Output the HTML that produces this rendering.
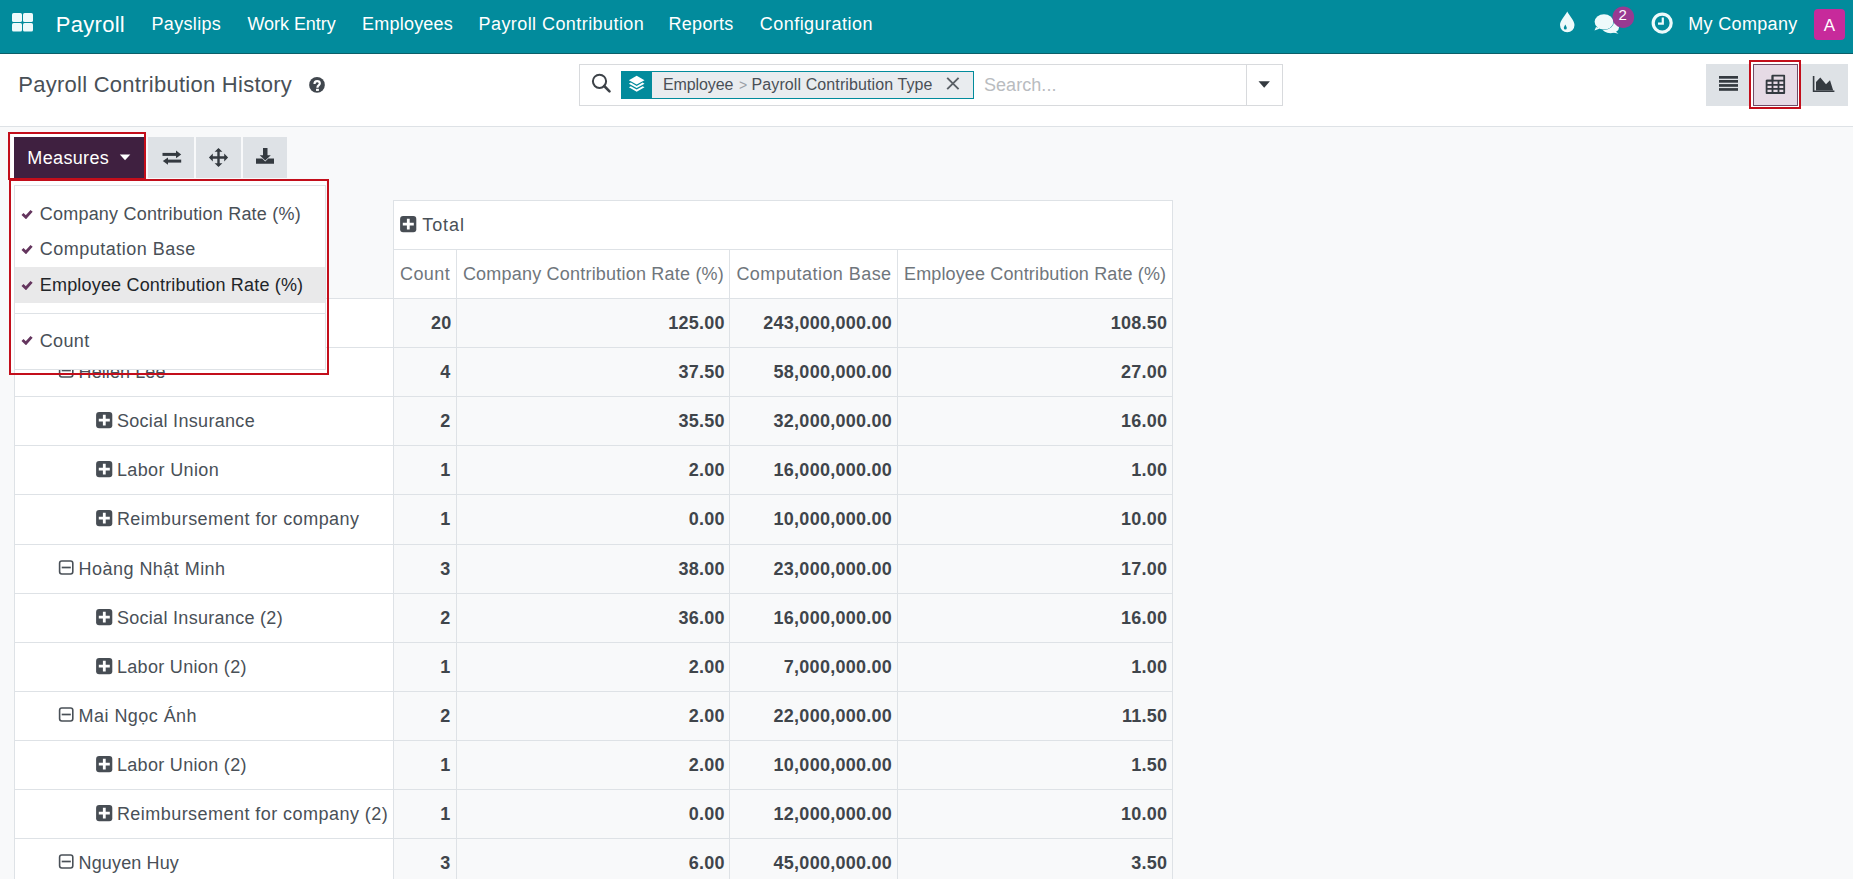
<!DOCTYPE html>
<html><head><meta charset="utf-8"><title>Payroll Contribution History</title>
<style>
html,body{margin:0;padding:0;}
body{width:1853px;height:879px;overflow:hidden;position:relative;background:#f8f9fa;font-family:"Liberation Sans",sans-serif;}
.t{position:absolute;white-space:nowrap;}
.r{position:absolute;display:block;}
</style></head><body>
<div class="r" style="left:0px;top:0px;width:1853px;height:54px;background:#028b9c;"></div>
<div class="r" style="left:0px;top:53px;width:1853px;height:1px;background:#0b5f69;"></div>
<svg class="r" style="left:11px;top:12px;" width="24" height="21" viewBox="0 0 24 21"><rect x="1" y="1" width="10" height="9" rx="1.6" fill="#eefafb"/><rect x="12" y="1" width="10" height="9" rx="1.6" fill="#eefafb"/><rect x="1" y="11" width="10" height="8.5" rx="1.6" fill="#eefafb"/><rect x="12" y="11" width="10" height="8.5" rx="1.6" fill="#eefafb"/></svg>
<div class="t" style="left:55.80px;top:14.00px;font-size:22px;line-height:22px;color:#ffffff;font-weight:400;letter-spacing:0.283px;">Payroll</div>
<div class="t" style="left:151.50px;top:15.00px;font-size:18px;line-height:18px;color:#ffffff;font-weight:400;letter-spacing:0.329px;">Payslips</div>
<div class="t" style="left:247.50px;top:15.00px;font-size:18px;line-height:18px;color:#ffffff;font-weight:400;letter-spacing:-0.056px;">Work Entry</div>
<div class="t" style="left:362.00px;top:15.00px;font-size:18px;line-height:18px;color:#ffffff;font-weight:400;letter-spacing:0.225px;">Employees</div>
<div class="t" style="left:478.50px;top:15.00px;font-size:18px;line-height:18px;color:#ffffff;font-weight:400;letter-spacing:0.432px;">Payroll Contribution</div>
<div class="t" style="left:668.50px;top:15.00px;font-size:18px;line-height:18px;color:#ffffff;font-weight:400;letter-spacing:0.300px;">Reports</div>
<div class="t" style="left:759.70px;top:15.00px;font-size:18px;line-height:18px;color:#ffffff;font-weight:400;letter-spacing:0.483px;">Configuration</div>
<svg class="r" style="left:1559px;top:11px;" width="17" height="22" viewBox="0 0 17 22"><path d="M8.25 0.4 C6.5 4 1 9.5 1 14 A7.25 7.25 0 0 0 15.5 14 C15.5 9.5 10 4 8.25 0.4 Z" fill="#eefafb"/><path d="M6.3 13.5 C5.6 15 4.8 16 4.8 17 A1.5 1.5 0 0 0 7.8 17 C7.8 16 7 15 6.3 13.5Z" fill="#028b9c"/></svg>
<svg class="r" style="left:1593px;top:12px;" width="28" height="24" viewBox="0 0 28 24"><ellipse cx="17.5" cy="15.5" rx="8.5" ry="5.8" fill="#eefafb"/><path d="M22 19 L25.5 21.8 L20 20.5Z" fill="#eefafb"/><ellipse cx="11" cy="9.8" rx="9.9" ry="8.1" fill="#028b9c"/><ellipse cx="11" cy="9.8" rx="9.4" ry="7.6" fill="#eefafb"/><path d="M3 15 L1.5 18.5 L7 16.5Z" fill="#eefafb"/></svg>
<svg class="r" style="left:1612px;top:6px;" width="23" height="23" viewBox="0 0 23 23"><circle cx="11.3" cy="11.2" r="10.8" fill="#983a91"/></svg>
<div class="t" style="left:1618.40px;top:7.10px;font-size:15px;line-height:15px;color:#ffffff;font-weight:400;letter-spacing:0.000px;">2</div>
<svg class="r" style="left:1651px;top:12px;" width="23" height="23" viewBox="0 0 23 23"><circle cx="11.2" cy="11.1" r="9" fill="none" stroke="#eefafb" stroke-width="3.2"/><path d="M11.8 5.5 V11.6 H7" fill="none" stroke="#eefafb" stroke-width="2.2"/></svg>
<div class="t" style="left:1688.30px;top:15.30px;font-size:18px;line-height:18px;color:#ffffff;font-weight:400;letter-spacing:0.322px;">My Company</div>
<div class="r" style="left:1814px;top:9px;width:31px;height:31px;background:#c72a9b;border-radius:4px;"></div>
<div class="t" style="left:1823.80px;top:16.80px;font-size:17px;line-height:17px;color:#ffffff;font-weight:400;letter-spacing:0.000px;">A</div>
<div class="r" style="left:0px;top:54px;width:1853px;height:72px;background:#ffffff;"></div>
<div class="r" style="left:0px;top:126px;width:1853px;height:1px;background:#dee2e6;"></div>
<div class="t" style="left:18.30px;top:74.00px;font-size:22px;line-height:22px;color:#495057;font-weight:400;letter-spacing:0.259px;">Payroll Contribution History</div>
<svg class="r" style="left:308px;top:77px;" width="18" height="17" viewBox="0 0 18 17"><circle cx="9" cy="7.9" r="7.85" fill="#41474e"/><path d="M6.5 6.9 C6.5 5.1 7.7 4.2 9.1 4.2 C10.7 4.2 11.8 5.1 11.8 6.5 C11.8 8.2 9.5 8.5 9.5 10.2 V10.7" fill="none" stroke="#fff" stroke-width="2.2"/><rect x="8.0" y="11.8" width="2.9" height="2.1" fill="#fff"/></svg>
<div class="r" style="left:579px;top:64px;width:704px;height:42px;background:#ffffff;box-sizing:border-box;border:1px solid #d8dadd;"></div>
<div class="r" style="left:1246px;top:64px;width:1px;height:42px;background:#d8dadd;"></div>
<svg class="r" style="left:590px;top:72px;" width="23" height="23" viewBox="0 0 23 23"><circle cx="9.5" cy="9.3" r="6.6" fill="none" stroke="#3d4248" stroke-width="2"/><path d="M14.2 14 L19.5 19.4" stroke="#3d4248" stroke-width="2.6" stroke-linecap="round"/></svg>
<div class="r" style="left:621px;top:71px;width:32px;height:28px;background:#028b9c;"></div>
<div class="r" style="left:652px;top:71px;width:322px;height:28px;background:#e9ecef;box-sizing:border-box;border:1px solid #028b9c;border-left:none;"></div>
<svg class="r" style="left:628px;top:75px;" width="18" height="18" viewBox="0 0 18 18"><path d="M8.7 0.8 L16.5 5.2 L8.7 9.6 L0.9 5.2Z" fill="#fff"/><path d="M2.8 7.6 L8.7 10.9 L14.6 7.6 L16.5 8.7 L8.7 13.1 L0.9 8.7Z" fill="#fff"/><path d="M2.8 11.2 L8.7 14.5 L14.6 11.2 L16.5 12.3 L8.7 16.8 L0.9 12.3Z" fill="#fff"/></svg>
<div class="t" style="left:663.00px;top:76.70px;font-size:16px;line-height:16px;color:#495057;font-weight:400;letter-spacing:-0.114px;">Employee</div>
<div class="t" style="left:739.00px;top:77.70px;font-size:14px;line-height:14px;color:#9aa0a6;font-weight:400;letter-spacing:0.000px;">&gt;</div>
<div class="t" style="left:751.50px;top:76.70px;font-size:16px;line-height:16px;color:#495057;font-weight:400;letter-spacing:0.104px;">Payroll Contribution Type</div>
<svg class="r" style="left:945px;top:76px;" width="16" height="15" viewBox="0 0 16 15"><path d="M2.2 1.8 L13.6 13.2 M13.6 1.8 L2.2 13.2" stroke="#5a6066" stroke-width="1.9"/></svg>
<div class="t" style="left:983.90px;top:75.70px;font-size:18px;line-height:18px;color:#b9bcbf;font-weight:400;letter-spacing:0.075px;">Search...</div>
<svg class="r" style="left:1256px;top:79px;" width="17" height="11" viewBox="0 0 17 11"><path d="M2.5 2.3 L13.9 2.3 L8.2 8.8Z" fill="#343a40"/></svg>
<div class="r" style="left:1706px;top:64px;width:142px;height:42px;background:#dee2e6;"></div>
<div class="r" style="left:1751px;top:62px;width:48px;height:46px;background:#ffffff;"></div>
<div class="r" style="left:1753px;top:64px;width:45px;height:42px;background:#e6dae5;box-sizing:border-box;border:1px solid #714b67;"></div>
<svg class="r" style="left:1717px;top:74px;" width="23" height="19" viewBox="0 0 23 19"><rect x="2" y="2" width="19" height="2.7" fill="#343a40"/><rect x="2" y="6" width="19" height="2.7" fill="#343a40"/><rect x="2" y="10.1" width="19" height="2.7" fill="#343a40"/><rect x="2" y="14.1" width="19" height="2.7" fill="#343a40"/></svg>
<svg class="r" style="left:1764px;top:73px;" width="23" height="23" viewBox="0 0 23 23"><path d="M8.5 2.6 H20.2 V20 H2.6 V7.6 H8.5Z" fill="none" stroke="#343a40" stroke-width="1.8" stroke-linejoin="round"/><path d="M8.5 2.6 V20 M14.5 7.6 V20 M2.6 7.6 H20.2 M2.6 11.8 H20.2 M2.6 15.9 H20.2" stroke="#343a40" stroke-width="1.8"/></svg>
<svg class="r" style="left:1811px;top:74px;" width="26" height="20" viewBox="0 0 26 20"><path d="M2.6 2 V17.3 H23.4" fill="none" stroke="#343a40" stroke-width="1.6"/><path d="M5 16.5 L5 8 L9.3 3.6 L15 10.2 L19 6.2 L22.2 16.5Z" fill="#343a40"/></svg>
<div class="r" style="left:1749px;top:60px;width:52px;height:49px;background:transparent;box-sizing:border-box;border:2px solid #c30e1b;"></div>
<div class="r" style="left:0px;top:127px;width:1853px;height:752px;background:#f8f9fa;"></div>
<div class="r" style="left:11px;top:134px;width:134px;height:45px;background:#ffffff;"></div>
<div class="r" style="left:14px;top:137px;width:130px;height:41px;background:#3f2040;"></div>
<div class="t" style="left:27.30px;top:149.00px;font-size:18px;line-height:18px;color:#ffffff;font-weight:400;letter-spacing:0.357px;">Measures</div>
<svg class="r" style="left:118px;top:152px;" width="14" height="10" viewBox="0 0 14 10"><path d="M1.8 2.6 L12.3 2.6 L7.05 8.3Z" fill="#fff"/></svg>
<div class="r" style="left:148px;top:137px;width:46px;height:41px;background:#dee2e6;"></div>
<div class="r" style="left:196px;top:137px;width:45px;height:41px;background:#dee2e6;"></div>
<div class="r" style="left:243px;top:137px;width:44px;height:41px;background:#dee2e6;"></div>
<svg class="r" style="left:160px;top:148px;" width="24" height="19" viewBox="0 0 24 19"><path d="M2.5 6.4 H17" stroke="#343a40" stroke-width="3"/><path d="M16 2.6 L21.2 6.4 L16 10.2Z" fill="#343a40"/><path d="M7 13.1 H21.2" stroke="#343a40" stroke-width="3"/><path d="M8 9.4 L2.8 13.1 L8 16.8Z" fill="#343a40"/></svg>
<svg class="r" style="left:208px;top:147px;" width="22" height="21" viewBox="0 0 22 21"><path d="M10.5 2.5 V18.5 M2.5 10.5 H18.5" stroke="#343a40" stroke-width="2.4"/><path d="M10.5 0.9 L14.4 4.8 L6.6 4.8Z M10.5 20.1 L14.4 16.2 L6.6 16.2Z M0.9 10.5 L4.8 6.6 L4.8 14.4Z M20.1 10.5 L16.2 6.6 L16.2 14.4Z" fill="#343a40"/></svg>
<svg class="r" style="left:255px;top:147px;" width="21" height="18" viewBox="0 0 21 18"><path d="M8 1 H12.5 V8.2 H15.8 L10.25 13.4 L4.7 8.2 H8Z" fill="#343a40"/><path d="M1 11.5 H7.2 L10.25 14.4 L13.3 11.5 H19 V16.8 H1Z" fill="#343a40"/></svg>
<div class="r" style="left:8px;top:132px;width:138px;height:48px;background:transparent;box-sizing:border-box;border:2px solid #c30e1b;"></div>
<div class="r" style="left:394px;top:200px;width:779px;height:98px;background:#ffffff;"></div>
<div class="r" style="left:15px;top:298px;width:379px;height:581px;background:#ffffff;"></div>
<div class="r" style="left:393px;top:200px;width:780px;height:1px;background:#dee2e6;"></div>
<div class="r" style="left:393px;top:249px;width:780px;height:1px;background:#dee2e6;"></div>
<div class="r" style="left:14px;top:298px;width:1159px;height:1px;background:#dee2e6;"></div>
<div class="r" style="left:14px;top:347px;width:1159px;height:1px;background:#dee2e6;"></div>
<div class="r" style="left:14px;top:396px;width:1159px;height:1px;background:#dee2e6;"></div>
<div class="r" style="left:14px;top:445px;width:1159px;height:1px;background:#dee2e6;"></div>
<div class="r" style="left:14px;top:494px;width:1159px;height:1px;background:#dee2e6;"></div>
<div class="r" style="left:14px;top:544px;width:1159px;height:1px;background:#dee2e6;"></div>
<div class="r" style="left:14px;top:593px;width:1159px;height:1px;background:#dee2e6;"></div>
<div class="r" style="left:14px;top:642px;width:1159px;height:1px;background:#dee2e6;"></div>
<div class="r" style="left:14px;top:691px;width:1159px;height:1px;background:#dee2e6;"></div>
<div class="r" style="left:14px;top:740px;width:1159px;height:1px;background:#dee2e6;"></div>
<div class="r" style="left:14px;top:789px;width:1159px;height:1px;background:#dee2e6;"></div>
<div class="r" style="left:14px;top:838px;width:1159px;height:1px;background:#dee2e6;"></div>
<div class="r" style="left:14px;top:298px;width:1px;height:581px;background:#dee2e6;"></div>
<div class="r" style="left:393px;top:200px;width:1px;height:679px;background:#dee2e6;"></div>
<div class="r" style="left:456px;top:249px;width:1px;height:630px;background:#dee2e6;"></div>
<div class="r" style="left:729px;top:249px;width:1px;height:630px;background:#dee2e6;"></div>
<div class="r" style="left:897px;top:249px;width:1px;height:630px;background:#dee2e6;"></div>
<div class="r" style="left:1172px;top:200px;width:1px;height:679px;background:#dee2e6;"></div>
<svg class="r" style="left:400px;top:216px;" width="17" height="17" viewBox="0 0 17 17"><rect x="0.1" y="0" width="16.2" height="16.2" rx="3" fill="#474d54"/><path d="M8.3 2.8 V13.6 M2.8 8.2 H13.8" stroke="#fff" stroke-width="2.8"/></svg>
<div class="t" style="left:422.30px;top:216.00px;font-size:18px;line-height:18px;color:#495057;font-weight:400;letter-spacing:0.900px;">Total</div>
<div class="t" style="left:400.00px;top:265.00px;font-size:18px;line-height:18px;color:#6f767c;font-weight:400;letter-spacing:0.400px;">Count</div>
<div class="t" style="left:462.90px;top:265.00px;font-size:18px;line-height:18px;color:#6f767c;font-weight:400;letter-spacing:0.207px;">Company Contribution Rate (%)</div>
<div class="t" style="left:736.40px;top:265.00px;font-size:18px;line-height:18px;color:#6f767c;font-weight:400;letter-spacing:0.440px;">Computation Base</div>
<div class="t" style="left:904.00px;top:265.00px;font-size:18px;line-height:18px;color:#6f767c;font-weight:400;letter-spacing:0.138px;">Employee Contribution Rate (%)</div>
<svg class="r" style="left:21px;top:314px;" width="16" height="15" viewBox="0 0 16 15"><rect x="1.6" y="1.0" width="13.2" height="13" rx="2.2" fill="none" stroke="#495057" stroke-width="1.6"/><path d="M3.7 7.5 H12.8" stroke="#495057" stroke-width="1.7"/></svg>
<div class="t" style="left:42.00px;top:313.80px;font-size:18px;line-height:18px;color:#495057;font-weight:400;letter-spacing:0.000px;">Total</div>
<div class="t" style="left:430.95px;top:313.80px;font-size:18px;line-height:18px;color:#3f454b;font-weight:700;letter-spacing:0.250px;">20</div>
<div class="t" style="left:668.15px;top:313.80px;font-size:18px;line-height:18px;color:#3f454b;font-weight:700;letter-spacing:0.250px;">125.00</div>
<div class="t" style="left:763.35px;top:313.80px;font-size:18px;line-height:18px;color:#3f454b;font-weight:700;letter-spacing:0.250px;">243,000,000.00</div>
<div class="t" style="left:1110.75px;top:313.80px;font-size:18px;line-height:18px;color:#3f454b;font-weight:700;letter-spacing:0.250px;">108.50</div>
<svg class="r" style="left:58px;top:363px;" width="16" height="15" viewBox="0 0 16 15"><rect x="1.6" y="1.0" width="13.2" height="13" rx="2.2" fill="none" stroke="#495057" stroke-width="1.6"/><path d="M3.7 7.5 H12.8" stroke="#495057" stroke-width="1.7"/></svg>
<div class="t" style="left:78.60px;top:362.80px;font-size:18px;line-height:18px;color:#495057;font-weight:400;letter-spacing:0.089px;">Hellen Lee</div>
<div class="t" style="left:440.20px;top:362.80px;font-size:18px;line-height:18px;color:#3f454b;font-weight:700;letter-spacing:0.250px;">4</div>
<div class="t" style="left:678.40px;top:362.80px;font-size:18px;line-height:18px;color:#3f454b;font-weight:700;letter-spacing:0.250px;">37.50</div>
<div class="t" style="left:773.60px;top:362.80px;font-size:18px;line-height:18px;color:#3f454b;font-weight:700;letter-spacing:0.250px;">58,000,000.00</div>
<div class="t" style="left:1121.00px;top:362.80px;font-size:18px;line-height:18px;color:#3f454b;font-weight:700;letter-spacing:0.250px;">27.00</div>
<svg class="r" style="left:96px;top:412px;" width="17" height="17" viewBox="0 0 17 17"><rect x="0.1" y="0" width="16.2" height="16.2" rx="3" fill="#474d54"/><path d="M8.3 2.8 V13.6 M2.8 8.2 H13.8" stroke="#fff" stroke-width="2.8"/></svg>
<div class="t" style="left:116.90px;top:411.80px;font-size:18px;line-height:18px;color:#495057;font-weight:400;letter-spacing:0.313px;">Social Insurance</div>
<div class="t" style="left:440.20px;top:411.80px;font-size:18px;line-height:18px;color:#3f454b;font-weight:700;letter-spacing:0.250px;">2</div>
<div class="t" style="left:678.40px;top:411.80px;font-size:18px;line-height:18px;color:#3f454b;font-weight:700;letter-spacing:0.250px;">35.50</div>
<div class="t" style="left:773.60px;top:411.80px;font-size:18px;line-height:18px;color:#3f454b;font-weight:700;letter-spacing:0.250px;">32,000,000.00</div>
<div class="t" style="left:1121.00px;top:411.80px;font-size:18px;line-height:18px;color:#3f454b;font-weight:700;letter-spacing:0.250px;">16.00</div>
<svg class="r" style="left:96px;top:461px;" width="17" height="17" viewBox="0 0 17 17"><rect x="0.1" y="0" width="16.2" height="16.2" rx="3" fill="#474d54"/><path d="M8.3 2.8 V13.6 M2.8 8.2 H13.8" stroke="#fff" stroke-width="2.8"/></svg>
<div class="t" style="left:116.90px;top:460.80px;font-size:18px;line-height:18px;color:#495057;font-weight:400;letter-spacing:0.370px;">Labor Union</div>
<div class="t" style="left:440.20px;top:460.80px;font-size:18px;line-height:18px;color:#3f454b;font-weight:700;letter-spacing:0.250px;">1</div>
<div class="t" style="left:688.65px;top:460.80px;font-size:18px;line-height:18px;color:#3f454b;font-weight:700;letter-spacing:0.250px;">2.00</div>
<div class="t" style="left:773.60px;top:460.80px;font-size:18px;line-height:18px;color:#3f454b;font-weight:700;letter-spacing:0.250px;">16,000,000.00</div>
<div class="t" style="left:1131.25px;top:460.80px;font-size:18px;line-height:18px;color:#3f454b;font-weight:700;letter-spacing:0.250px;">1.00</div>
<svg class="r" style="left:96px;top:510px;" width="17" height="17" viewBox="0 0 17 17"><rect x="0.1" y="0" width="16.2" height="16.2" rx="3" fill="#474d54"/><path d="M8.3 2.8 V13.6 M2.8 8.2 H13.8" stroke="#fff" stroke-width="2.8"/></svg>
<div class="t" style="left:116.90px;top:509.80px;font-size:18px;line-height:18px;color:#495057;font-weight:400;letter-spacing:0.462px;">Reimbursement for company</div>
<div class="t" style="left:440.20px;top:509.80px;font-size:18px;line-height:18px;color:#3f454b;font-weight:700;letter-spacing:0.250px;">1</div>
<div class="t" style="left:688.65px;top:509.80px;font-size:18px;line-height:18px;color:#3f454b;font-weight:700;letter-spacing:0.250px;">0.00</div>
<div class="t" style="left:773.60px;top:509.80px;font-size:18px;line-height:18px;color:#3f454b;font-weight:700;letter-spacing:0.250px;">10,000,000.00</div>
<div class="t" style="left:1121.00px;top:509.80px;font-size:18px;line-height:18px;color:#3f454b;font-weight:700;letter-spacing:0.250px;">10.00</div>
<svg class="r" style="left:58px;top:560px;" width="16" height="15" viewBox="0 0 16 15"><rect x="1.6" y="1.0" width="13.2" height="13" rx="2.2" fill="none" stroke="#495057" stroke-width="1.6"/><path d="M3.7 7.5 H12.8" stroke="#495057" stroke-width="1.7"/></svg>
<div class="t" style="left:78.60px;top:559.80px;font-size:18px;line-height:18px;color:#495057;font-weight:400;letter-spacing:0.457px;">Hoàng Nhật Minh</div>
<div class="t" style="left:440.20px;top:559.80px;font-size:18px;line-height:18px;color:#3f454b;font-weight:700;letter-spacing:0.250px;">3</div>
<div class="t" style="left:678.40px;top:559.80px;font-size:18px;line-height:18px;color:#3f454b;font-weight:700;letter-spacing:0.250px;">38.00</div>
<div class="t" style="left:773.60px;top:559.80px;font-size:18px;line-height:18px;color:#3f454b;font-weight:700;letter-spacing:0.250px;">23,000,000.00</div>
<div class="t" style="left:1121.00px;top:559.80px;font-size:18px;line-height:18px;color:#3f454b;font-weight:700;letter-spacing:0.250px;">17.00</div>
<svg class="r" style="left:96px;top:609px;" width="17" height="17" viewBox="0 0 17 17"><rect x="0.1" y="0" width="16.2" height="16.2" rx="3" fill="#474d54"/><path d="M8.3 2.8 V13.6 M2.8 8.2 H13.8" stroke="#fff" stroke-width="2.8"/></svg>
<div class="t" style="left:116.90px;top:608.80px;font-size:18px;line-height:18px;color:#495057;font-weight:400;letter-spacing:0.300px;">Social Insurance (2)</div>
<div class="t" style="left:440.20px;top:608.80px;font-size:18px;line-height:18px;color:#3f454b;font-weight:700;letter-spacing:0.250px;">2</div>
<div class="t" style="left:678.40px;top:608.80px;font-size:18px;line-height:18px;color:#3f454b;font-weight:700;letter-spacing:0.250px;">36.00</div>
<div class="t" style="left:773.60px;top:608.80px;font-size:18px;line-height:18px;color:#3f454b;font-weight:700;letter-spacing:0.250px;">16,000,000.00</div>
<div class="t" style="left:1121.00px;top:608.80px;font-size:18px;line-height:18px;color:#3f454b;font-weight:700;letter-spacing:0.250px;">16.00</div>
<svg class="r" style="left:96px;top:658px;" width="17" height="17" viewBox="0 0 17 17"><rect x="0.1" y="0" width="16.2" height="16.2" rx="3" fill="#474d54"/><path d="M8.3 2.8 V13.6 M2.8 8.2 H13.8" stroke="#fff" stroke-width="2.8"/></svg>
<div class="t" style="left:116.90px;top:657.80px;font-size:18px;line-height:18px;color:#495057;font-weight:400;letter-spacing:0.321px;">Labor Union (2)</div>
<div class="t" style="left:440.20px;top:657.80px;font-size:18px;line-height:18px;color:#3f454b;font-weight:700;letter-spacing:0.250px;">1</div>
<div class="t" style="left:688.65px;top:657.80px;font-size:18px;line-height:18px;color:#3f454b;font-weight:700;letter-spacing:0.250px;">2.00</div>
<div class="t" style="left:783.85px;top:657.80px;font-size:18px;line-height:18px;color:#3f454b;font-weight:700;letter-spacing:0.250px;">7,000,000.00</div>
<div class="t" style="left:1131.25px;top:657.80px;font-size:18px;line-height:18px;color:#3f454b;font-weight:700;letter-spacing:0.250px;">1.00</div>
<svg class="r" style="left:58px;top:707px;" width="16" height="15" viewBox="0 0 16 15"><rect x="1.6" y="1.0" width="13.2" height="13" rx="2.2" fill="none" stroke="#495057" stroke-width="1.6"/><path d="M3.7 7.5 H12.8" stroke="#495057" stroke-width="1.7"/></svg>
<div class="t" style="left:78.60px;top:706.80px;font-size:18px;line-height:18px;color:#495057;font-weight:400;letter-spacing:0.445px;">Mai Ngọc Ánh</div>
<div class="t" style="left:440.20px;top:706.80px;font-size:18px;line-height:18px;color:#3f454b;font-weight:700;letter-spacing:0.250px;">2</div>
<div class="t" style="left:688.65px;top:706.80px;font-size:18px;line-height:18px;color:#3f454b;font-weight:700;letter-spacing:0.250px;">2.00</div>
<div class="t" style="left:773.60px;top:706.80px;font-size:18px;line-height:18px;color:#3f454b;font-weight:700;letter-spacing:0.250px;">22,000,000.00</div>
<div class="t" style="left:1122.00px;top:706.80px;font-size:18px;line-height:18px;color:#3f454b;font-weight:700;letter-spacing:0.250px;">11.50</div>
<svg class="r" style="left:96px;top:756px;" width="17" height="17" viewBox="0 0 17 17"><rect x="0.1" y="0" width="16.2" height="16.2" rx="3" fill="#474d54"/><path d="M8.3 2.8 V13.6 M2.8 8.2 H13.8" stroke="#fff" stroke-width="2.8"/></svg>
<div class="t" style="left:116.90px;top:755.80px;font-size:18px;line-height:18px;color:#495057;font-weight:400;letter-spacing:0.321px;">Labor Union (2)</div>
<div class="t" style="left:440.20px;top:755.80px;font-size:18px;line-height:18px;color:#3f454b;font-weight:700;letter-spacing:0.250px;">1</div>
<div class="t" style="left:688.65px;top:755.80px;font-size:18px;line-height:18px;color:#3f454b;font-weight:700;letter-spacing:0.250px;">2.00</div>
<div class="t" style="left:773.60px;top:755.80px;font-size:18px;line-height:18px;color:#3f454b;font-weight:700;letter-spacing:0.250px;">10,000,000.00</div>
<div class="t" style="left:1131.25px;top:755.80px;font-size:18px;line-height:18px;color:#3f454b;font-weight:700;letter-spacing:0.250px;">1.50</div>
<svg class="r" style="left:96px;top:805px;" width="17" height="17" viewBox="0 0 17 17"><rect x="0.1" y="0" width="16.2" height="16.2" rx="3" fill="#474d54"/><path d="M8.3 2.8 V13.6 M2.8 8.2 H13.8" stroke="#fff" stroke-width="2.8"/></svg>
<div class="t" style="left:116.90px;top:804.80px;font-size:18px;line-height:18px;color:#495057;font-weight:400;letter-spacing:0.454px;">Reimbursement for company (2)</div>
<div class="t" style="left:440.20px;top:804.80px;font-size:18px;line-height:18px;color:#3f454b;font-weight:700;letter-spacing:0.250px;">1</div>
<div class="t" style="left:688.65px;top:804.80px;font-size:18px;line-height:18px;color:#3f454b;font-weight:700;letter-spacing:0.250px;">0.00</div>
<div class="t" style="left:773.60px;top:804.80px;font-size:18px;line-height:18px;color:#3f454b;font-weight:700;letter-spacing:0.250px;">12,000,000.00</div>
<div class="t" style="left:1121.00px;top:804.80px;font-size:18px;line-height:18px;color:#3f454b;font-weight:700;letter-spacing:0.250px;">10.00</div>
<svg class="r" style="left:58px;top:854px;" width="16" height="15" viewBox="0 0 16 15"><rect x="1.6" y="1.0" width="13.2" height="13" rx="2.2" fill="none" stroke="#495057" stroke-width="1.6"/><path d="M3.7 7.5 H12.8" stroke="#495057" stroke-width="1.7"/></svg>
<div class="t" style="left:78.60px;top:853.80px;font-size:18px;line-height:18px;color:#495057;font-weight:400;letter-spacing:0.133px;">Nguyen Huy</div>
<div class="t" style="left:440.20px;top:853.80px;font-size:18px;line-height:18px;color:#3f454b;font-weight:700;letter-spacing:0.250px;">3</div>
<div class="t" style="left:688.65px;top:853.80px;font-size:18px;line-height:18px;color:#3f454b;font-weight:700;letter-spacing:0.250px;">6.00</div>
<div class="t" style="left:773.60px;top:853.80px;font-size:18px;line-height:18px;color:#3f454b;font-weight:700;letter-spacing:0.250px;">45,000,000.00</div>
<div class="t" style="left:1131.25px;top:853.80px;font-size:18px;line-height:18px;color:#3f454b;font-weight:700;letter-spacing:0.250px;">3.50</div>
<div class="r" style="left:11px;top:181px;width:315px;height:189px;background:#ffffff;"></div>
<div class="r" style="left:14px;top:185px;width:312px;height:185px;background:#ffffff;box-sizing:border-box;border:1px solid #dee2e6;"></div>
<div class="r" style="left:15px;top:267px;width:310px;height:36px;background:#e9e9ea;"></div>
<div class="r" style="left:15px;top:313px;width:310px;height:1px;background:#dee2e6;"></div>
<svg class="r" style="left:21px;top:209px;" width="12" height="10" viewBox="0 0 12 10"><path d="M1.5 5 L4.9 8.2 L10.6 1.9" fill="none" stroke="#64355e" stroke-width="2.9"/></svg>
<div class="t" style="left:39.80px;top:205.40px;font-size:18px;line-height:18px;color:#495057;font-weight:400;letter-spacing:0.204px;">Company Contribution Rate (%)</div>
<svg class="r" style="left:21px;top:244px;" width="12" height="10" viewBox="0 0 12 10"><path d="M1.5 5 L4.9 8.2 L10.6 1.9" fill="none" stroke="#64355e" stroke-width="2.9"/></svg>
<div class="t" style="left:39.80px;top:240.30px;font-size:18px;line-height:18px;color:#495057;font-weight:400;letter-spacing:0.493px;">Computation Base</div>
<svg class="r" style="left:21px;top:280px;" width="12" height="10" viewBox="0 0 12 10"><path d="M1.5 5 L4.9 8.2 L10.6 1.9" fill="none" stroke="#64355e" stroke-width="2.9"/></svg>
<div class="t" style="left:39.80px;top:276.10px;font-size:18px;line-height:18px;color:#212529;font-weight:400;letter-spacing:0.179px;">Employee Contribution Rate (%)</div>
<svg class="r" style="left:21px;top:335px;" width="12" height="10" viewBox="0 0 12 10"><path d="M1.5 5 L4.9 8.2 L10.6 1.9" fill="none" stroke="#64355e" stroke-width="2.9"/></svg>
<div class="t" style="left:39.80px;top:331.60px;font-size:18px;line-height:18px;color:#495057;font-weight:400;letter-spacing:0.325px;">Count</div>
<div class="r" style="left:9px;top:179px;width:320px;height:196px;background:transparent;box-sizing:border-box;border:2px solid #c30e1b;"></div>
</body></html>
